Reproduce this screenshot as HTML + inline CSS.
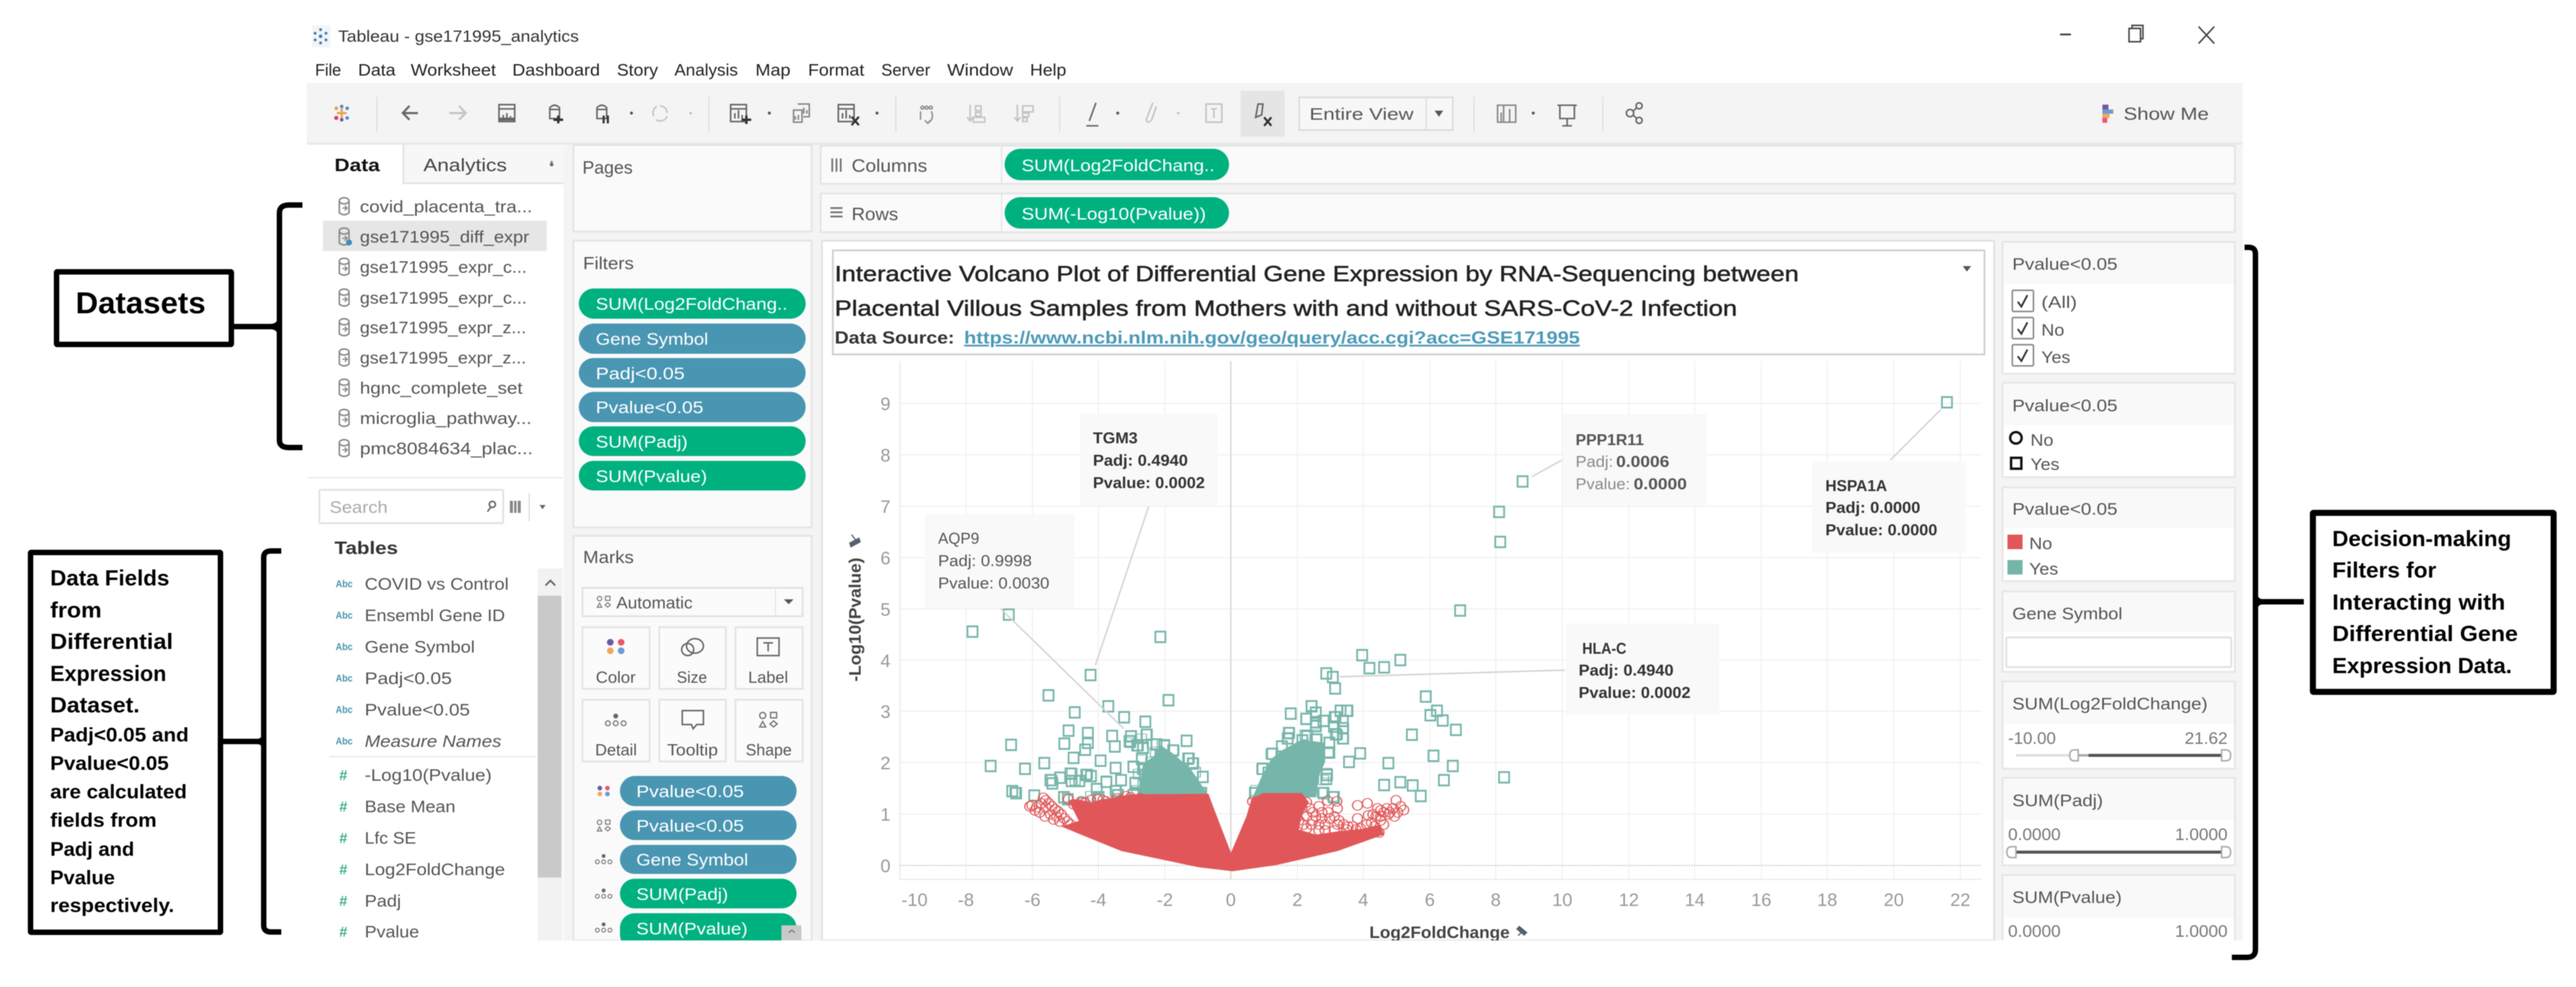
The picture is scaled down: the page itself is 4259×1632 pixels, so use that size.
<!DOCTYPE html>
<html><head><meta charset="utf-8"><title>Tableau - gse171995_analytics</title>
<style>
html,body{margin:0;padding:0;background:#fff;width:4259px;height:1632px;overflow:hidden}
svg{display:block;filter:blur(.8px)}
text{font-family:"Liberation Sans",sans-serif;fill:#555;font-size:28px;white-space:pre}
.k{fill:#222}.b{font-weight:bold;fill:#000}.w{fill:#fff}.g{fill:#999}.t{font-weight:bold;fill:#333;font-size:26px}.tg{fill:#555;font-size:26px}.tl{fill:#8a8a8a;font-size:26px}
.card{fill:#fff;stroke:#e6e6e6;stroke-width:3}.hd{fill:#f9f9f9}.pan{fill:#fafafa;stroke:#e4e4e4;stroke-width:3}
.ic{fill:none;stroke:#666;stroke-width:2.6}.ig{fill:none;stroke:#c4c4c4;stroke-width:2.6}
.br{fill:none;stroke:#000;stroke-width:9}
.btn{fill:#fbfbfb;stroke:#e4e4e4;stroke-width:3}
</style></head><body>
<svg width="4259" height="1632" viewBox="0 0 4259 1632" xmlns="http://www.w3.org/2000/svg">
<defs>
<marker id="s" markerUnits="userSpaceOnUse" markerWidth="36" markerHeight="36" refX="18" refY="18" overflow="visible"><rect x="5" y="5" width="26" height="26" fill="none" stroke="#76b5aa" stroke-width="4.5"/></marker>
<marker id="s2" markerUnits="userSpaceOnUse" markerWidth="50" markerHeight="60" refX="25" refY="30" overflow="visible"><rect x="9" y="6" width="32" height="48" fill="none" stroke="#76b5aa" stroke-width="3.4" vector-effect="non-scaling-stroke"/></marker>
<marker id="c2" markerUnits="userSpaceOnUse" markerWidth="50" markerHeight="60" refX="25" refY="30" overflow="visible"><ellipse cx="25" cy="30" rx="16" ry="24" fill="none" stroke="#e15759" stroke-width="4" vector-effect="non-scaling-stroke"/></marker>
<g id="ds"><ellipse cx="0" cy="-10" rx="8" ry="5" fill="none" stroke="#888" stroke-width="2.5"/><path d="M-8 -10V10Q0 16 8 10V-10" fill="none" stroke="#888" stroke-width="2.5"/><path d="M-3 2H4M1 -2L5 2L1 6" fill="none" stroke="#888" stroke-width="2"/></g>
<g id="dots"><circle cx="-9" cy="-7" r="5.5" fill="#6c5b9e"/><circle cx="9" cy="-7" r="5.5" fill="#e8596b"/><circle cx="-9" cy="7" r="5.5" fill="#f2a65f"/><circle cx="9" cy="7" r="5.5" fill="#6e9bd3"/></g>
<g id="shape"><circle cx="-9" cy="-7" r="5" fill="none" stroke="#777" stroke-width="2.2"/><rect x="4" y="-12" width="10" height="9" fill="none" stroke="#777" stroke-width="2.2"/><path d="M-14 12L-9 3L-4 12Z" fill="none" stroke="#777" stroke-width="2.2"/><path d="M9 2L15 7L9 12L3 7Z" fill="none" stroke="#777" stroke-width="2.2"/></g>
<g id="detail"><circle cx="0" cy="-7" r="4" fill="#666"/><circle cx="-13" cy="5" r="4" fill="none" stroke="#777" stroke-width="2"/><circle cx="0" cy="5" r="4" fill="none" stroke="#777" stroke-width="2"/><circle cx="13" cy="5" r="4" fill="none" stroke="#777" stroke-width="2"/></g>
</defs>

<!-- title bar -->
<rect x="516" y="42" width="30" height="36" fill="#f2f4f6"/>
<g fill="#3f7fb5"><circle cx="530" cy="60" r="3"/><circle cx="530" cy="49" r="2.4"/><circle cx="530" cy="71" r="2.4"/><circle cx="521" cy="55" r="2.4"/><circle cx="539" cy="55" r="2.4"/><circle cx="521" cy="66" r="2.4"/><circle cx="539" cy="66" r="2.4"/></g>
<text x="559" y="69" textLength="398" lengthAdjust="spacingAndGlyphs" style="font-size:27px;fill:#333">Tableau - gse171995_analytics</text>
<path d="M3406 57H3424" stroke="#444" stroke-width="3"/>
<rect x="3520" y="47" width="19" height="22" fill="none" stroke="#444" stroke-width="2.5"/><path d="M3525 47V42H3543V64H3539" fill="none" stroke="#444" stroke-width="2.5"/>
<path d="M3635 44L3661 72M3661 44L3635 72" stroke="#444" stroke-width="2.5"/>

<!-- menu -->
<text class="k" x="521" y="125" textLength="43" lengthAdjust="spacingAndGlyphs">File</text>
<text class="k" x="592" y="125" textLength="62" lengthAdjust="spacingAndGlyphs">Data</text>
<text class="k" x="679" y="125" textLength="141" lengthAdjust="spacingAndGlyphs">Worksheet</text>
<text class="k" x="847" y="125" textLength="145" lengthAdjust="spacingAndGlyphs">Dashboard</text>
<text class="k" x="1020" y="125" textLength="68" lengthAdjust="spacingAndGlyphs">Story</text>
<text class="k" x="1115" y="125" textLength="105" lengthAdjust="spacingAndGlyphs">Analysis</text>
<text class="k" x="1249" y="125" textLength="58" lengthAdjust="spacingAndGlyphs">Map</text>
<text class="k" x="1336" y="125" textLength="93" lengthAdjust="spacingAndGlyphs">Format</text>
<text class="k" x="1457" y="125" textLength="81" lengthAdjust="spacingAndGlyphs">Server</text>
<text class="k" x="1566" y="125" textLength="109" lengthAdjust="spacingAndGlyphs">Window</text>
<text class="k" x="1703" y="125" textLength="60" lengthAdjust="spacingAndGlyphs">Help</text>

<!-- app background -->
<rect x="507" y="137" width="3201" height="1418" fill="#f4f4f4"/>
<rect x="507" y="236" width="3201" height="3" fill="#e6e6e6"/>

<!-- toolbar icons -->
<g><circle cx="565" cy="176" r="3" fill="#4f8fc0"/><path d="M565 178V196M557 187H573" stroke="#e8a04f" stroke-width="3.5"/><circle cx="556" cy="179" r="3" fill="#e8a04f"/><circle cx="574" cy="179" r="3" fill="#4f8fc0"/><circle cx="556" cy="195" r="3.5" fill="#d8455a"/><circle cx="574" cy="195" r="3" fill="#4f8fc0"/><circle cx="565" cy="198" r="3" fill="#6c5b9e"/></g>
<g stroke="#ddd" stroke-width="2"><path d="M623 160V218M1172 160V218M1481 160V218M1752 160V218M2437 160V218M2650 160V218"/></g>
<path d="M691 187H666M677 175L666 187L677 198" fill="none" stroke="#666" stroke-width="3.5"/>
<path d="M743 187H770M759 175L770 187L759 198" fill="none" stroke="#c4c4c4" stroke-width="3.5"/>
<rect x="825" y="173" width="26" height="28" class="ic"/><path d="M825 180H851" class="ic"/><path d="M825 197H851" stroke="#666" stroke-width="5"/><path d="M832 197V190M838 197V187M844 197V192" class="ic"/>
<path d="M909 178Q917 170 925 178V196H909ZM909 181H925" class="ic"/><path d="M915 198H931M923 191V204" stroke="#333" stroke-width="4"/>
<path d="M987 178Q995 170 1003 178V196H987ZM987 181H1003" class="ic"/><path d="M998 191V204M1005 191V204" stroke="#333" stroke-width="3.5"/>
<circle cx="1044" cy="187" r="2.5" fill="#555"/>
<path d="M1091 175A12 12 0 0 1 1103 187M1103 192A12 12 0 0 1 1085 198M1081 192A12 12 0 0 1 1086 176" class="ig"/><circle cx="1142" cy="187" r="2" fill="#bbb"/>
<rect x="1208" y="173" width="26" height="28" class="ic"/><path d="M1208 180H1234" class="ic"/><path d="M1215 196V187M1221 196V182M1227 196V190" class="ic"/><path d="M1226 198H1242M1234 191V205" stroke="#333" stroke-width="4"/>
<circle cx="1272" cy="187" r="2.5" fill="#555"/>
<path d="M1312 182H1326V202H1312ZM1319 172H1338V193H1328" class="ic" style="stroke:#888"/><path d="M1315 198V192M1320 198V190M1329 188V178M1334 188V182" class="ic" style="stroke:#888"/>
<rect x="1386" y="173" width="26" height="28" class="ic"/><path d="M1386 180H1412" class="ic"/><path d="M1393 196V187M1399 196V182M1405 196V190" class="ic"/><path d="M1408 193L1420 207M1420 193L1408 207" stroke="#333" stroke-width="3.5"/>
<circle cx="1450" cy="187" r="2.5" fill="#555"/>
<g fill="none" stroke="#888" stroke-width="2.2"><circle cx="1525" cy="178" r="2.5"/><circle cx="1532" cy="178" r="2.5"/><circle cx="1539" cy="178" r="2.5"/><path d="M1522 184V198M1540 184Q1545 198 1534 203M1529 199L1534 204L1538 199"/></g>
<path d="M1604 173V199M1599 194L1604 200L1609 194M1613 175H1622V183H1613ZM1613 186H1622V192H1613ZM1609 194H1628V202H1609Z" class="ig"/>
<path d="M1682 173V199M1677 194L1682 200L1687 194M1691 175H1708V185H1691ZM1691 187H1701V193H1691ZM1691 195H1698V201H1691Z" class="ig"/>
<path d="M1812 170L1801 200M1796 208H1816" class="ic"/><circle cx="1848" cy="187" r="2.5" fill="#555"/>
<path d="M1906 170L1895 198Q1898 206 1904 198L1912 176" class="ig"/><circle cx="1948" cy="187" r="2" fill="#bbb"/>
<rect x="1994" y="172" width="26" height="30" class="ig"/><path d="M2002 180H2012M2007 180V195" class="ig"/>
<rect x="2051" y="150" width="73" height="76" fill="#e5e5e5"/>
<path d="M2080 172L2076 194L2086 190L2088 172Z" class="ic"/><path d="M2090 194L2102 208M2102 194L2090 208" stroke="#333" stroke-width="3.5"/>
<rect x="2148" y="161" width="254" height="54" fill="#f7f7f7" stroke="#ddd" stroke-width="3"/>
<path d="M2358 161V215" stroke="#ddd" stroke-width="2"/>
<text x="2165" y="198" textLength="172" lengthAdjust="spacingAndGlyphs">Entire View</text>
<path d="M2372 183H2386L2379 193Z" fill="#555"/>
<path d="M2476 174H2506V202H2476ZM2486 174V202M2496 180V202M2482 186V202" class="ic" style="stroke:#888"/><circle cx="2535" cy="187" r="2.5" fill="#555"/>
<path d="M2575 174H2607M2579 174V196H2603V174M2591 196V208M2583 208H2599" class="ic"/>
<circle cx="2695" cy="187" r="6" class="ic"/><circle cx="2710" cy="175" r="5" class="ic"/><circle cx="2710" cy="199" r="5" class="ic"/><path d="M2700 184L2706 178M2700 190L2706 196" class="ic"/>
<rect x="3476" y="173" width="10" height="8" fill="#6c5b9e"/><rect x="3476" y="181" width="18" height="7" fill="#6e9bd3"/><rect x="3476" y="188" width="12" height="7" fill="#f2a65f"/><rect x="3476" y="195" width="8" height="8" fill="#e8596b"/>
<text x="3511" y="198" textLength="141" lengthAdjust="spacingAndGlyphs" style="font-size:29px">Show Me</text>

<!-- Left panel -->
<rect x="507" y="239" width="425" height="1316" fill="#fff"/>
<rect x="667" y="239" width="265" height="64" fill="#f7f7f7"/><path d="M667 239V303H932" fill="none" stroke="#e4e4e4" stroke-width="3"/>
<text x="553" y="283" textLength="75" lengthAdjust="spacingAndGlyphs" style="font-weight:bold;font-size:30px;fill:#111">Data</text>
<text x="700" y="283" textLength="138" lengthAdjust="spacingAndGlyphs" style="font-size:30px;fill:#444">Analytics</text>
<circle cx="912" cy="272" r="3" fill="#666"/><circle cx="912" cy="268" r="2" fill="#888"/>
<rect x="534" y="365" width="370" height="50" fill="#e6e6e6"/>
<use href="#ds" x="569" y="342"/><use href="#ds" x="569" y="392"/><use href="#ds" x="569" y="442"/><use href="#ds" x="569" y="493"/><use href="#ds" x="569" y="542"/><use href="#ds" x="569" y="592"/><use href="#ds" x="569" y="642"/><use href="#ds" x="569" y="692"/><use href="#ds" x="569" y="742"/>
<circle cx="577" cy="401" r="5" fill="#3a8fb8"/>
<text x="595" y="351" textLength="285" lengthAdjust="spacingAndGlyphs">covid_placenta_tra...</text>
<text x="595" y="401" textLength="280" lengthAdjust="spacingAndGlyphs">gse171995_diff_expr</text>
<text x="595" y="451" textLength="276" lengthAdjust="spacingAndGlyphs">gse171995_expr_c...</text>
<text x="595" y="502" textLength="276" lengthAdjust="spacingAndGlyphs">gse171995_expr_c...</text>
<text x="595" y="551" textLength="275" lengthAdjust="spacingAndGlyphs">gse171995_expr_z...</text>
<text x="595" y="601" textLength="275" lengthAdjust="spacingAndGlyphs">gse171995_expr_z...</text>
<text x="595" y="651" textLength="269" lengthAdjust="spacingAndGlyphs">hgnc_complete_set</text>
<text x="595" y="701" textLength="284" lengthAdjust="spacingAndGlyphs">microglia_pathway...</text>
<text x="595" y="751" textLength="286" lengthAdjust="spacingAndGlyphs">pmc8084634_plac...</text>
<path d="M508 790H930" stroke="#e8e8e8" stroke-width="2"/>
<rect x="528" y="810" width="304" height="55" rx="2" fill="#fff" stroke="#e2e2e2" stroke-width="3"/>
<text x="545" y="848" textLength="96" lengthAdjust="spacingAndGlyphs" style="fill:#aaa">Search</text>
<circle cx="814" cy="834" r="5" class="ic"/><path d="M811 839L806 846" class="ic"/>
<path d="M843 828H861V848H843Z" fill="#888"/><path d="M849 828V848M855 828V848" stroke="#fff" stroke-width="2"/>
<path d="M875 815V862" stroke="#ddd" stroke-width="2"/><path d="M892 835H902L897 842Z" fill="#666"/>
<text x="553" y="916" textLength="105" lengthAdjust="spacingAndGlyphs" style="font-size:30px;font-weight:bold;fill:#333">Tables</text>

<text x="555" y="971" textLength="28" lengthAdjust="spacingAndGlyphs" style="font-size:17px;fill:#4996b2;font-weight:bold">Abc</text>
<text x="555" y="1023" textLength="28" lengthAdjust="spacingAndGlyphs" style="font-size:17px;fill:#4996b2;font-weight:bold">Abc</text>
<text x="555" y="1075" textLength="28" lengthAdjust="spacingAndGlyphs" style="font-size:17px;fill:#4996b2;font-weight:bold">Abc</text>
<text x="555" y="1127" textLength="28" lengthAdjust="spacingAndGlyphs" style="font-size:17px;fill:#4996b2;font-weight:bold">Abc</text>
<text x="555" y="1179" textLength="28" lengthAdjust="spacingAndGlyphs" style="font-size:17px;fill:#4996b2;font-weight:bold">Abc</text>
<text x="555" y="1231" textLength="28" lengthAdjust="spacingAndGlyphs" style="font-size:17px;fill:#4996b2;font-weight:bold">Abc</text>
<text x="561" y="1290" style="font-size:24px;fill:#3bae8c;font-weight:bold">#</text>
<text x="561" y="1342" style="font-size:24px;fill:#3bae8c;font-weight:bold">#</text>
<text x="561" y="1394" style="font-size:24px;fill:#3bae8c;font-weight:bold">#</text>
<text x="561" y="1446" style="font-size:24px;fill:#3bae8c;font-weight:bold">#</text>
<text x="561" y="1498" style="font-size:24px;fill:#3bae8c;font-weight:bold">#</text>
<text x="561" y="1549" style="font-size:24px;fill:#3bae8c;font-weight:bold">#</text>
<text x="603" y="975" textLength="238" lengthAdjust="spacingAndGlyphs">COVID vs Control</text>
<text x="603" y="1027" textLength="232" lengthAdjust="spacingAndGlyphs">Ensembl Gene ID</text>
<text x="603" y="1079" textLength="182" lengthAdjust="spacingAndGlyphs">Gene Symbol</text>
<text x="603" y="1131" textLength="144" lengthAdjust="spacingAndGlyphs">Padj&lt;0.05</text>
<text x="603" y="1183" textLength="174" lengthAdjust="spacingAndGlyphs">Pvalue&lt;0.05</text>
<text x="603" y="1235" textLength="226" lengthAdjust="spacingAndGlyphs" style="font-style:italic">Measure Names</text>
<path d="M545 1251H887" stroke="#e8e8e8" stroke-width="2"/>
<text x="603" y="1291" textLength="210" lengthAdjust="spacingAndGlyphs">-Log10(Pvalue)</text>
<text x="603" y="1343" textLength="150" lengthAdjust="spacingAndGlyphs">Base Mean</text>
<text x="603" y="1395" textLength="85" lengthAdjust="spacingAndGlyphs">Lfc SE</text>
<text x="603" y="1447" textLength="232" lengthAdjust="spacingAndGlyphs">Log2FoldChange</text>
<text x="603" y="1499" textLength="60" lengthAdjust="spacingAndGlyphs">Padj</text>
<text x="603" y="1550" textLength="90" lengthAdjust="spacingAndGlyphs">Pvalue</text>
<rect x="889" y="940" width="41" height="615" fill="#f2f2f2"/>
<rect x="889" y="985" width="39" height="466" fill="#c9c9c9"/>
<path d="M902 968L910 960L918 968" fill="none" stroke="#666" stroke-width="3"/>

<!-- middle panels -->
<rect x="948" y="240" width="394" height="143" class="pan"/>
<text x="963" y="287" textLength="83" lengthAdjust="spacingAndGlyphs" style="font-size:30px">Pages</text>
<rect x="948" y="398" width="394" height="474" class="pan"/>
<text x="964" y="445" textLength="84" lengthAdjust="spacingAndGlyphs" style="font-size:29px">Filters</text>
<rect x="957" y="477" width="375" height="50" rx="25" fill="#00b180"/>
<rect x="957" y="535" width="375" height="50" rx="25" fill="#4996b2"/>
<rect x="957" y="592" width="375" height="49" rx="24.5" fill="#4996b2"/>
<rect x="957" y="648" width="375" height="50" rx="25" fill="#4996b2"/>
<rect x="957" y="705" width="375" height="49" rx="24.5" fill="#00b180"/>
<rect x="957" y="762" width="375" height="49" rx="24.5" fill="#00b180"/>
<text class="w" x="985" y="512" textLength="317" lengthAdjust="spacingAndGlyphs">SUM(Log2FoldChang..</text>
<text class="w" x="985" y="570" textLength="186" lengthAdjust="spacingAndGlyphs">Gene Symbol</text>
<text class="w" x="985" y="627" textLength="147" lengthAdjust="spacingAndGlyphs">Padj&lt;0.05</text>
<text class="w" x="985" y="683" textLength="178" lengthAdjust="spacingAndGlyphs">Pvalue&lt;0.05</text>
<text class="w" x="985" y="740" textLength="152" lengthAdjust="spacingAndGlyphs">SUM(Padj)</text>
<text class="w" x="985" y="797" textLength="184" lengthAdjust="spacingAndGlyphs">SUM(Pvalue)</text>

<rect x="948" y="886" width="394" height="669" class="pan"/>
<text x="964" y="931" textLength="84" lengthAdjust="spacingAndGlyphs" style="font-size:29px">Marks</text>
<rect x="963" y="972" width="364" height="47" fill="#fbfbfb" stroke="#e2e2e2" stroke-width="3"/>
<path d="M1282 974V1017" stroke="#e6e6e6" stroke-width="2"/><path d="M1296 991H1312L1304 999Z" fill="#555"/>
<use href="#shape" transform="translate(998 995) scale(.75)"/>
<text x="1019" y="1006" textLength="126" lengthAdjust="spacingAndGlyphs">Automatic</text>
<rect x="963" y="1037" width="111" height="102" class="btn"/><rect x="1090" y="1037" width="110" height="102" class="btn"/><rect x="1216" y="1037" width="111" height="102" class="btn"/>
<rect x="963" y="1157" width="111" height="102" class="btn"/><rect x="1090" y="1157" width="110" height="102" class="btn"/><rect x="1216" y="1157" width="111" height="102" class="btn"/>
<use href="#dots" x="1018" y="1069"/>
<circle cx="1137" cy="1074" r="10" fill="none" stroke="#666" stroke-width="2.5"/><ellipse cx="1149" cy="1068" rx="14" ry="12" fill="none" stroke="#666" stroke-width="2.5"/>
<rect x="1252" y="1055" width="36" height="29" fill="none" stroke="#666" stroke-width="2.5"/><path d="M1262 1063H1278M1270 1063V1077" stroke="#666" stroke-width="2.5"/>
<use href="#detail" x="1018" y="1191"/>
<path d="M1128 1175H1163V1198H1152L1146 1205L1143 1198H1128Z" fill="none" stroke="#666" stroke-width="2.5"/>
<use href="#shape" x="1270" y="1190"/>
<text x="985" y="1129" textLength="66" lengthAdjust="spacingAndGlyphs" style="font-size:27px">Color</text>
<text x="1119" y="1129" textLength="50" lengthAdjust="spacingAndGlyphs" style="font-size:27px">Size</text>
<text x="1237" y="1129" textLength="66" lengthAdjust="spacingAndGlyphs" style="font-size:27px">Label</text>
<text x="984" y="1249" textLength="69" lengthAdjust="spacingAndGlyphs" style="font-size:27px">Detail</text>
<text x="1103" y="1249" textLength="84" lengthAdjust="spacingAndGlyphs" style="font-size:27px">Tooltip</text>
<text x="1233" y="1249" textLength="76" lengthAdjust="spacingAndGlyphs" style="font-size:27px">Shape</text>
<use href="#dots" transform="translate(998 1308) scale(.7)"/>
<use href="#shape" transform="translate(998 1365) scale(.75)"/>
<use href="#detail" transform="translate(998 1421) scale(.8)"/>
<use href="#detail" transform="translate(998 1478) scale(.8)"/>
<use href="#detail" transform="translate(998 1534) scale(.8)"/>
<rect x="1025" y="1283" width="292" height="50" rx="25" fill="#4996b2"/>
<rect x="1025" y="1340" width="292" height="49" rx="24.5" fill="#4996b2"/>
<rect x="1025" y="1397" width="292" height="48" rx="24" fill="#4996b2"/>
<rect x="1025" y="1453" width="292" height="49" rx="24.5" fill="#00b180"/>
<rect x="1025" y="1510" width="292" height="60" rx="24.5" fill="#00b180"/>
<text class="w" x="1052" y="1318" textLength="178" lengthAdjust="spacingAndGlyphs">Pvalue&lt;0.05</text>
<text class="w" x="1052" y="1375" textLength="178" lengthAdjust="spacingAndGlyphs">Pvalue&lt;0.05</text>
<text class="w" x="1052" y="1431" textLength="185" lengthAdjust="spacingAndGlyphs">Gene Symbol</text>
<text class="w" x="1052" y="1488" textLength="152" lengthAdjust="spacingAndGlyphs">SUM(Padj)</text>
<text class="w" x="1052" y="1545" textLength="184" lengthAdjust="spacingAndGlyphs">SUM(Pvalue)</text>
<rect x="1292" y="1530" width="33" height="40" fill="#c9c9c9"/><path d="M1304 1542L1309 1538L1314 1542" fill="none" stroke="#777" stroke-width="2"/>

<!-- shelves -->
<rect x="1357" y="241" width="2338" height="63" class="pan"/><rect x="1357" y="320" width="2338" height="64" class="pan"/>
<path d="M1656 241V304M1656 320V384" stroke="#e4e4e4" stroke-width="2"/>
<path d="M1376 262V284M1383 262V284M1390 262V284" stroke="#777" stroke-width="3"/>
<path d="M1373 344H1393M1373 351H1393M1373 358H1393" stroke="#777" stroke-width="3"/>
<text x="1408" y="284" textLength="125" lengthAdjust="spacingAndGlyphs" style="font-size:30px">Columns</text>
<text x="1408" y="364" textLength="77" lengthAdjust="spacingAndGlyphs" style="font-size:30px">Rows</text>
<rect x="1661" y="246" width="371" height="52" rx="26" fill="#00b180"/>
<rect x="1661" y="326" width="371" height="52" rx="26" fill="#00b180"/>
<text class="w" x="1689" y="283" textLength="319" lengthAdjust="spacingAndGlyphs">SUM(Log2FoldChang..</text>
<text class="w" x="1689" y="363" textLength="305" lengthAdjust="spacingAndGlyphs">SUM(-Log10(Pvalue))</text>

<!-- main view -->
<rect x="1359" y="398" width="1938" height="1157" fill="#fff" stroke="#e2e2e2" stroke-width="3"/>
<rect x="1377" y="414" width="1904" height="172" fill="#fff" stroke="#d0d0d0" stroke-width="3"/>
<path d="M3245 440H3259L3252 449Z" fill="#555"/>
<text x="1380" y="465" textLength="1594" lengthAdjust="spacingAndGlyphs" stroke="#222" stroke-width=".7" style="font-size:36px;fill:#222">Interactive Volcano Plot of Differential Gene Expression by RNA-Sequencing between</text>
<text x="1380" y="522" textLength="1492" lengthAdjust="spacingAndGlyphs" stroke="#222" stroke-width=".7" style="font-size:36px;fill:#222">Placental Villous Samples from Mothers with and without SARS-CoV-2 Infection</text>
<text x="1380" y="568" textLength="198" lengthAdjust="spacingAndGlyphs" style="font-size:29px;font-weight:bold;fill:#333">Data Source:</text>
<text x="1594" y="568" textLength="1018" lengthAdjust="spacingAndGlyphs" text-decoration="underline" style="font-size:29px;font-weight:bold;fill:#4d9ab8">https://www.ncbi.nlm.nih.gov/geo/query/acc.cgi?acc=GSE171995</text>

<!-- plot grid -->
<g stroke="#f1f1f1" stroke-width="2">
<path d="M1597 597V1454M1707 597V1454M1816 597V1454M1926 597V1454M2145 597V1454M2254 597V1454M2364 597V1454M2473 597V1454M2583 597V1454M2693 597V1454M2802 597V1454M2912 597V1454M3021 597V1454M3131 597V1454M3241 597V1454"/>
<path d="M1488 1346H3276M1488 1261H3276M1488 1176H3276M1488 1091H3276M1488 1007H3276M1488 922H3276M1488 837H3276M1488 752H3276M1488 667H3276"/>
</g>
<path d="M1488 597V1454H3276" fill="none" stroke="#eaeaea" stroke-width="2"/>
<path d="M2035 597V1454" stroke="#dcdcdc" stroke-width="2.5"/>
<path d="M1488 1431H3276" stroke="#c4c4c4" stroke-width="2" stroke-dasharray="2 2"/>

<!-- sparse squares -->
<g transform="translate(1370 580) scale(.6378 .6711)">
<polyline fill="none" stroke="none" marker-start="url(#s)" marker-mid="url(#s)" marker-end="url(#s)" points="373,692 467,650 860,705 679,799 570,849 725,876 638,891 881,861 766,903 821,914 622,936 672,942 735,949 784,950 825,946 611,968 672,966 473,971 742,975 665,983 928,961 780,962 800,972 815,978 850,970 870,972 893,985 635,1003 705,1010 420,1023 509,1030 559,1016 744,1028 790,1025 812,1005 815,1030 932,1005 945,1017 627,1042 668,1045 680,1048 600,1052 575,1058 580,1066 630,1060 650,1060 720,1062 758,1058 795,1065 970,1050 476,1085 486,1090 533,1096 610,1100 620,1105 695,1080 745,1085 965,1090 660,1115 820,1045 830,1060 700,1100 750,1095 790,1095 860,1000 880,1010 1383,750 1402,782 1440,780 1482,762 1290,795 1307,804 1313,832 1548,852 1252,876 1263,892 1198,894 1327,887 1345,887 1238,907 1263,915 1283,912 1312,903 1333,912 1263,925 1310,926 1333,930 1512,946 1560,898 1193,942 1190,955 1240,950 1228,960 1265,958 1315,945 1333,955 1298,966 1175,975 1150,993 1298,990 1378,992 1349,1013 1451,1016 1568,998 1125,1030 1140,1040 1292,1045 1290,1055 1283,1090 1440,1070 1482,1063 1514,1071 1535,1097 1310,1100 1105,1090 2899,127 1799,322 1738,397 1741,471 1637,640 1577,887 1592,911 1626,934 1618,1023 1751,1051 1595,1058"/>
</g>
<!-- dense cores -->
<g transform="translate(1650 1150) scale(.5102 .3333)">
<path d="M455 495L470 340L505 300L525 245L565 285L625 365L660 445L682 495ZM825 505L855 400L885 315L925 268L985 218L1060 235L1060 330L1040 400L1030 505Z" fill="#76b5aa"/>
<polyline fill="none" stroke="none" marker-start="url(#s2)" marker-mid="url(#s2)" marker-end="url(#s2)" points="480,195 430,200 430,235 465,215 455,250 500,240 540,250 570,270 510,280 535,300 465,320 495,330 440,355 475,355 445,430 475,400 530,350 620,310 630,335 665,405 640,380 660,480 455,390 470,440 450,470 490,460 320,460 350,430 400,420 380,470 300,500 240,385 290,390 250,420 175,420 55,480 118,495 215,505 945,185 940,215 995,195 1030,215 920,250 885,290 855,365 1075,235 1070,280 1065,385 1055,420 1050,480 1085,500 835,470 1120,215 1100,195 1120,160 1090,155 1030,145 1030,80 1015,50 1000,115 1055,125 1110,75 1130,75 1095,105 1118,125"/>
<path d="M205 650L262 622L228 520L260 515L300 530L330 518L380 505L430 490L682 488L702 570L755 780L805 600L822 510L860 484L985 484L1008 530L985 590L975 665L1030 690L1110 672L1180 662L1240 640L1250 690L1100 772L900 842L760 872L650 852L400 772Z" fill="#e15759"/>
<polyline fill="none" stroke="none" marker-start="url(#c2)" marker-mid="url(#c2)" marker-end="url(#c2)" points="103,550 120,570 135,580 152,600 180,615 200,625 147,508 165,535 185,565 205,590 228,515 245,540 282,535 322,515 340,520 362,540 400,520 430,505 460,510 110,545 125,555 140,535 155,555 170,590 190,600 215,610 195,575 175,550 155,520 235,640 225,625 270,525 300,520 350,525 385,510 415,500 825,525 1000,530 1068,522 1098,525 1100,560 1165,545 1197,535 1165,610 1200,595 1290,520 1315,568 1285,600 1260,560 1240,570 1225,600 1250,640 1235,680 1040,550 1070,580 1105,620 1060,640 1000,600 985,560 1020,580 1135,650 1175,660 1040,670 975,620 1015,640 1075,610 1100,640 1210,630 1240,620 1270,580 1010,560 1030,600 1050,580 1090,600 1120,640 1150,650 1040,640 990,640 1000,660 1060,670 1090,670 1195,640 1220,650 1240,600 1265,590 1250,580 1280,560 1305,550 1295,580 1230,560 1215,590 1130,665 1160,665 1020,620 1050,610"/>
</g>

<!-- ticks -->
<text class="g" x="1464" y="678" text-anchor="middle" style="font-size:30px">9</text>
<text class="g" x="1464" y="763" text-anchor="middle" style="font-size:30px">8</text>
<text class="g" x="1464" y="848" text-anchor="middle" style="font-size:30px">7</text>
<text class="g" x="1464" y="933" text-anchor="middle" style="font-size:30px">6</text>
<text class="g" x="1464" y="1018" text-anchor="middle" style="font-size:30px">5</text>
<text class="g" x="1464" y="1103" text-anchor="middle" style="font-size:30px">4</text>
<text class="g" x="1464" y="1187" text-anchor="middle" style="font-size:30px">3</text>
<text class="g" x="1464" y="1272" text-anchor="middle" style="font-size:30px">2</text>
<text class="g" x="1464" y="1357" text-anchor="middle" style="font-size:30px">1</text>
<text class="g" x="1464" y="1442" text-anchor="middle" style="font-size:30px">0</text>
<text class="g" x="1512" y="1498" text-anchor="middle" style="font-size:30px">-10</text>
<text class="g" x="1597" y="1498" text-anchor="middle" style="font-size:30px">-8</text>
<text class="g" x="1707" y="1498" text-anchor="middle" style="font-size:30px">-6</text>
<text class="g" x="1816" y="1498" text-anchor="middle" style="font-size:30px">-4</text>
<text class="g" x="1926" y="1498" text-anchor="middle" style="font-size:30px">-2</text>
<text class="g" x="2035" y="1498" text-anchor="middle" style="font-size:30px">0</text>
<text class="g" x="2145" y="1498" text-anchor="middle" style="font-size:30px">2</text>
<text class="g" x="2254" y="1498" text-anchor="middle" style="font-size:30px">4</text>
<text class="g" x="2364" y="1498" text-anchor="middle" style="font-size:30px">6</text>
<text class="g" x="2473" y="1498" text-anchor="middle" style="font-size:30px">8</text>
<text class="g" x="2583" y="1498" text-anchor="middle" style="font-size:30px">10</text>
<text class="g" x="2693" y="1498" text-anchor="middle" style="font-size:30px">12</text>
<text class="g" x="2802" y="1498" text-anchor="middle" style="font-size:30px">14</text>
<text class="g" x="2912" y="1498" text-anchor="middle" style="font-size:30px">16</text>
<text class="g" x="3021" y="1498" text-anchor="middle" style="font-size:30px">18</text>
<text class="g" x="3131" y="1498" text-anchor="middle" style="font-size:30px">20</text>
<text class="g" x="3241" y="1498" text-anchor="middle" style="font-size:30px">22</text>
<text x="2264" y="1551" textLength="232" lengthAdjust="spacingAndGlyphs" style="font-size:28px;font-weight:bold;fill:#444">Log2FoldChange</text>
<path d="M2512 1532L2524 1542L2520 1546L2508 1536ZM2510 1547L2516 1541" fill="#556070" stroke="#556070" stroke-width="2"/>
<text transform="translate(1423 1127) rotate(-90)" x="0" y="0" textLength="205" lengthAdjust="spacingAndGlyphs" style="font-size:28px;font-weight:bold;fill:#444">-Log10(Pvalue)</text>
<path d="M1405 898L1420 890L1422 896L1407 904ZM1408 884L1414 892" fill="#556070" stroke="#556070" stroke-width="2"/>

<!-- annotations -->
<g stroke="#d4d4d4" stroke-width="2.5"><path d="M1654 1006L1858 1205M1899 838L1811 1100M2215 1119L2587 1108M2533 788L2582 761M3125 761L3209 677"/></g>
<g fill="#f9f9f9"><rect x="1786" y="684" width="227" height="152"/><rect x="1529" y="850" width="247" height="156"/><rect x="2584" y="685" width="238" height="150"/><rect x="2996" y="763" width="254" height="151"/><rect x="2589" y="1031" width="253" height="150"/></g>
<text class="t" x="1807" y="733" textLength="74" lengthAdjust="spacingAndGlyphs">TGM3</text>
<text class="t" x="1807" y="770" textLength="157" lengthAdjust="spacingAndGlyphs">Padj: 0.4940</text>
<text class="t" x="1807" y="807" textLength="185" lengthAdjust="spacingAndGlyphs">Pvalue: 0.0002</text>
<text class="tg" x="1551" y="899" textLength="68" lengthAdjust="spacingAndGlyphs">AQP9</text>
<text class="tg" x="1551" y="936" textLength="155" lengthAdjust="spacingAndGlyphs">Padj: 0.9998</text>
<text class="tg" x="1551" y="973" textLength="184" lengthAdjust="spacingAndGlyphs">Pvalue: 0.0030</text>
<text class="t" x="2605" y="736" textLength="113" lengthAdjust="spacingAndGlyphs" style="fill:#555">PPP1R11</text>
<text class="tl" x="2605" y="772" textLength="62" lengthAdjust="spacingAndGlyphs">Padj:</text>
<text class="t" x="2672" y="772" textLength="88" lengthAdjust="spacingAndGlyphs" style="fill:#555">0.0006</text>
<text class="tl" x="2605" y="809" textLength="90" lengthAdjust="spacingAndGlyphs">Pvalue:</text>
<text class="t" x="2701" y="809" textLength="88" lengthAdjust="spacingAndGlyphs" style="fill:#555">0.0000</text>
<text class="t" x="3018" y="812" textLength="102" lengthAdjust="spacingAndGlyphs">HSPA1A</text>
<text class="t" x="3018" y="848" textLength="157" lengthAdjust="spacingAndGlyphs">Padj: 0.0000</text>
<text class="t" x="3018" y="885" textLength="185" lengthAdjust="spacingAndGlyphs">Pvalue: 0.0000</text>
<text class="t" x="2616" y="1081" textLength="73" lengthAdjust="spacingAndGlyphs">HLA-C</text>
<text class="t" x="2610" y="1117" textLength="157" lengthAdjust="spacingAndGlyphs">Padj: 0.4940</text>
<text class="t" x="2610" y="1154" textLength="185" lengthAdjust="spacingAndGlyphs">Pvalue: 0.0002</text>

<!-- right filter cards -->
<rect x="3311" y="400" width="384" height="218" class="card"/><rect x="3313" y="402" width="380" height="67" class="hd"/>
<rect x="3311" y="633" width="384" height="156" class="card"/><rect x="3313" y="635" width="380" height="68" class="hd"/>
<rect x="3311" y="806" width="384" height="155" class="card"/><rect x="3313" y="808" width="380" height="65" class="hd"/>
<rect x="3311" y="978" width="384" height="133" class="card"/><rect x="3313" y="980" width="380" height="65" class="hd"/>
<rect x="3311" y="1127" width="384" height="144" class="card"/><rect x="3313" y="1129" width="380" height="68" class="hd"/>
<rect x="3311" y="1286" width="384" height="145" class="card"/><rect x="3313" y="1288" width="380" height="68" class="hd"/>
<rect x="3311" y="1447" width="384" height="125" class="card"/><rect x="3313" y="1449" width="380" height="68" class="hd"/>
<text x="3327" y="446" textLength="174" lengthAdjust="spacingAndGlyphs">Pvalue&lt;0.05</text>
<text x="3327" y="680" textLength="174" lengthAdjust="spacingAndGlyphs">Pvalue&lt;0.05</text>
<text x="3327" y="851" textLength="174" lengthAdjust="spacingAndGlyphs">Pvalue&lt;0.05</text>
<text x="3327" y="1024" textLength="182" lengthAdjust="spacingAndGlyphs">Gene Symbol</text>
<text x="3327" y="1173" textLength="323" lengthAdjust="spacingAndGlyphs">SUM(Log2FoldChange)</text>
<text x="3327" y="1333" textLength="150" lengthAdjust="spacingAndGlyphs">SUM(Padj)</text>
<text x="3327" y="1493" textLength="181" lengthAdjust="spacingAndGlyphs">SUM(Pvalue)</text>
<g fill="#fff" stroke="#888" stroke-width="2.5"><rect x="3327" y="480" width="35" height="35" rx="2"/><rect x="3327" y="525" width="35" height="35" rx="2"/><rect x="3327" y="570" width="35" height="35" rx="2"/></g>
<path d="M3336 499L3342 507L3352 488M3336 544L3342 552L3352 533M3336 589L3342 597L3352 578" fill="none" stroke="#333" stroke-width="3"/>
<text x="3375" y="509" textLength="59" lengthAdjust="spacingAndGlyphs">(All)</text>
<text x="3375" y="555" textLength="38" lengthAdjust="spacingAndGlyphs">No</text>
<text x="3375" y="600" textLength="48" lengthAdjust="spacingAndGlyphs">Yes</text>
<circle cx="3333" cy="724" r="9.5" fill="none" stroke="#111" stroke-width="4"/>
<rect x="3325" y="757" width="17" height="18" fill="none" stroke="#111" stroke-width="4"/>
<text x="3357" y="737" textLength="38" lengthAdjust="spacingAndGlyphs">No</text>
<text x="3357" y="777" textLength="48" lengthAdjust="spacingAndGlyphs">Yes</text>
<rect x="3319" y="884" width="25" height="24" fill="#e15759"/><rect x="3319" y="926" width="25" height="24" fill="#76b5aa"/>
<text x="3355" y="908" textLength="38" lengthAdjust="spacingAndGlyphs">No</text>
<text x="3355" y="950" textLength="48" lengthAdjust="spacingAndGlyphs">Yes</text>
<rect x="3317" y="1054" width="372" height="49" rx="2" fill="#fff" stroke="#e0e0e0" stroke-width="3"/>
<text x="3320" y="1230" textLength="79" lengthAdjust="spacingAndGlyphs" style="fill:#777">-10.00</text>
<text x="3612" y="1230" textLength="71" lengthAdjust="spacingAndGlyphs" style="fill:#777">21.62</text>
<text x="3320" y="1389" textLength="87" lengthAdjust="spacingAndGlyphs" style="fill:#777">0.0000</text>
<text x="3596" y="1389" textLength="87" lengthAdjust="spacingAndGlyphs" style="fill:#777">1.0000</text>
<text x="3320" y="1549" textLength="87" lengthAdjust="spacingAndGlyphs" style="fill:#777">0.0000</text>
<text x="3596" y="1549" textLength="87" lengthAdjust="spacingAndGlyphs" style="fill:#777">1.0000</text>
<path d="M3333 1249H3422" stroke="#ddd" stroke-width="4"/><path d="M3437 1249H3453" stroke="#aaa" stroke-width="4"/><path d="M3453 1249H3673" stroke="#555" stroke-width="5"/>
<path d="M3333 1409H3673" stroke="#555" stroke-width="5"/>
<g fill="#fff" stroke="#aaa" stroke-width="2.5">
<path d="M3436 1240H3429Q3422 1240 3422 1249Q3422 1258 3429 1258H3436Z"/><path d="M3673 1240H3680Q3688 1240 3688 1249Q3688 1258 3680 1258H3673Z"/>
<path d="M3333 1400H3326Q3318 1400 3318 1409Q3318 1418 3326 1418H3333Z"/><path d="M3673 1400H3680Q3688 1400 3688 1409Q3688 1418 3680 1418H3673Z"/>
</g>

<!-- white mask below app -->
<rect x="507" y="1555" width="3201" height="77" fill="#fff"/>

<!-- annotation boxes & braces -->
<rect x="93.5" y="449.5" width="289" height="120" fill="#fff" stroke="#000" stroke-width="9" rx="1"/>
<text class="b" x="125" y="518" textLength="215" lengthAdjust="spacingAndGlyphs" style="font-size:50px">Datasets</text>
<path class="br" d="M500 339H478Q462 339 462 352V728Q462 740 478 740H500"/>
<path class="br" d="M387 540H448Q458 540 462 532M448 540Q458 540 462 548"/>

<rect x="50.5" y="913.5" width="314" height="628" fill="#fff" stroke="#000" stroke-width="9" rx="1"/>
<text class="b" x="83" y="968" textLength="197" lengthAdjust="spacingAndGlyphs" style="font-size:36px">Data Fields</text>
<text class="b" x="83" y="1021" textLength="85" lengthAdjust="spacingAndGlyphs" style="font-size:36px">from</text>
<text class="b" x="83" y="1073" textLength="203" lengthAdjust="spacingAndGlyphs" style="font-size:36px">Differential</text>
<text class="b" x="83" y="1126" textLength="192" lengthAdjust="spacingAndGlyphs" style="font-size:36px">Expression</text>
<text class="b" x="83" y="1178" textLength="148" lengthAdjust="spacingAndGlyphs" style="font-size:36px">Dataset.</text>
<text class="b" x="83" y="1226" textLength="229" lengthAdjust="spacingAndGlyphs" style="font-size:32px">Padj&lt;0.05 and</text>
<text class="b" x="83" y="1273" textLength="196" lengthAdjust="spacingAndGlyphs" style="font-size:32px">Pvalue&lt;0.05</text>
<text class="b" x="83" y="1320" textLength="226" lengthAdjust="spacingAndGlyphs" style="font-size:32px">are calculated</text>
<text class="b" x="83" y="1367" textLength="176" lengthAdjust="spacingAndGlyphs" style="font-size:32px">fields from</text>
<text class="b" x="83" y="1415" textLength="139" lengthAdjust="spacingAndGlyphs" style="font-size:32px">Padj and</text>
<text class="b" x="83" y="1462" textLength="107" lengthAdjust="spacingAndGlyphs" style="font-size:32px">Pvalue</text>
<text class="b" x="83" y="1508" textLength="205" lengthAdjust="spacingAndGlyphs" style="font-size:32px">respectively.</text>
<path class="br" d="M465 911H448Q436 911 436 922V1530Q436 1541 448 1541H465"/>
<path class="br" d="M369 1226H426Q433 1226 436 1220M426 1226Q433 1226 436 1232"/>

<rect x="3824" y="848" width="398" height="296" fill="#fff" stroke="#000" stroke-width="10" rx="1"/>
<text class="b" x="3856" y="903" textLength="296" lengthAdjust="spacingAndGlyphs" style="font-size:36px">Decision-making</text>
<text class="b" x="3856" y="955" textLength="172" lengthAdjust="spacingAndGlyphs" style="font-size:36px">Filters for</text>
<text class="b" x="3856" y="1008" textLength="286" lengthAdjust="spacingAndGlyphs" style="font-size:36px">Interacting with</text>
<text class="b" x="3856" y="1060" textLength="307" lengthAdjust="spacingAndGlyphs" style="font-size:36px">Differential Gene</text>
<text class="b" x="3856" y="1113" textLength="297" lengthAdjust="spacingAndGlyphs" style="font-size:36px">Expression Data.</text>
<path class="br" d="M3711 409H3718Q3729 409 3729 420V1570Q3729 1583 3715 1583H3690"/>
<path class="br" d="M3809 995H3740Q3733 995 3729 988M3740 995Q3733 995 3729 1002"/>
</svg>
</body></html>
